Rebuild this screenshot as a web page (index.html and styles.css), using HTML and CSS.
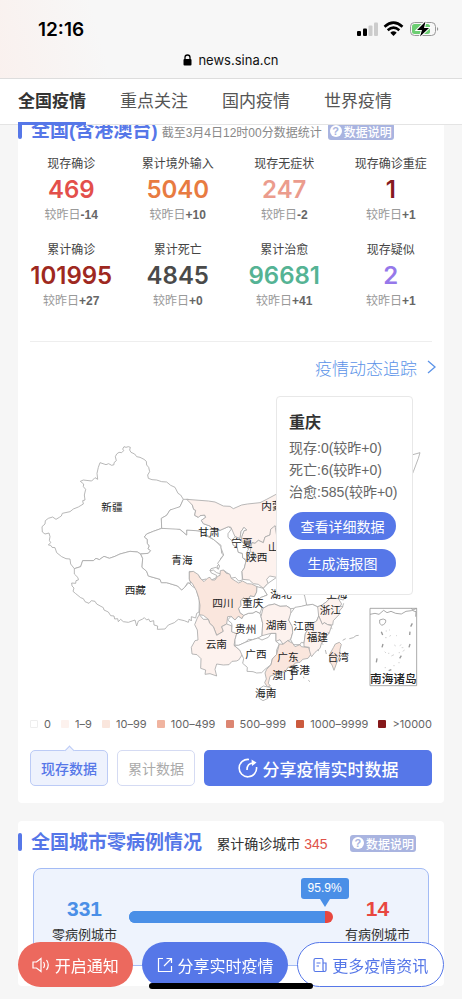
FILE: index.html
```html
<!DOCTYPE html>
<html lang="zh-CN">
<head>
    <meta charset="UTF-8">
    <meta name="viewport" content="width=device-width, initial-scale=1.0">
    <title>全国疫情</title>
    <link rel="stylesheet" href="styles.css">
</head>
<body>
    <header class="header">
        <div class="status-bar">
            <span class="time">12:16</span>
            <svg class="status-icons" width="84" height="18" viewBox="0 0 84 18" aria-hidden="true">
                <rect x="1" y="11" width="4" height="5" rx="1"/>
                <rect x="7" y="8.500" width="4" height="7.500" rx="1"/>
                <rect x="12.500" y="5.500" width="4" height="10.500" rx="1" fill="#ccc"/>
                <rect x="18" y="2.500" width="4" height="13.500" rx="1" fill="#ccc"/>
                <path d="M28.500 6.700Q37.500-1.300 46.500 6.700" fill="none" stroke="#000" stroke-width="2.600"/>
                <path d="M31.700 10.200Q37.500 5 43.300 10.200" fill="none" stroke="#000" stroke-width="2.600"/>
                <path d="M34.300 12.700Q37.500 10 40.700 12.700L37.500 16z"/>
                <rect x="54.500" y="2.500" width="25" height="13" rx="4" fill="none" stroke="#999"/>
                <rect x="56" y="4" width="18" height="10" rx="2.500" fill="#6cce72"/>
                <path d="M81 7v4q2.500-2 0-4z" fill="#999"/>
                <path d="M69.500 1.500L61 10h5l-2 6.500L73 8h-5z" stroke="#fff" stroke-width="2"/>
                <path d="M69.500 1.500L61 10h5l-2 6.500L73 8h-5z"/>
            </svg>
        </div>
        <div class="address">
            <svg width="9" height="12" viewBox="0 0 9 12" aria-hidden="true">
                <path d="M2 6V3.500a2.500 2.500 0 0 1 5 0V6" fill="none" stroke="#000" stroke-width="1.300"/>
                <rect x="0.500" y="5" width="8" height="6.500" rx="1"/>
            </svg>
            <span>news.sina.cn</span>
        </div>
        <nav class="tabs">
            <a href="#china" class="tab active">全国疫情</a>
            <a href="#focus" class="tab">重点关注</a>
            <a href="#domestic" class="tab">国内疫情</a>
            <a href="#world" class="tab">世界疫情</a>
        </nav>
    </header>

    <main class="content">
        <section class="card" id="china">
            <div class="card-head">
                <h2>全国(含港澳台)</h2>
                <span class="head-note">截至3月4日12时00分数据统计</span>
                <button type="button" class="explain"><span class="question">?</span>数据说明</button>
            </div>

            <div class="stats">
                <div class="stat">
                    <span class="stat-label">现存确诊</span>
                    <strong class="stat-value red">469</strong>
                    <span class="stat-diff">较昨日<b>-14</b></span>
                </div>
                <div class="stat">
                    <span class="stat-label">累计境外输入</span>
                    <strong class="stat-value orange">5040</strong>
                    <span class="stat-diff">较昨日<b>+10</b></span>
                </div>
                <div class="stat">
                    <span class="stat-label">现存无症状</span>
                    <strong class="stat-value pink">247</strong>
                    <span class="stat-diff">较昨日<b>-2</b></span>
                </div>
                <div class="stat">
                    <span class="stat-label">现存确诊重症</span>
                    <strong class="stat-value maroon">1</strong>
                    <span class="stat-diff">较昨日<b>+1</b></span>
                </div>
                <div class="stat">
                    <span class="stat-label">累计确诊</span>
                    <strong class="stat-value dark-red">101995</strong>
                    <span class="stat-diff">较昨日<b>+27</b></span>
                </div>
                <div class="stat">
                    <span class="stat-label">累计死亡</span>
                    <strong class="stat-value black">4845</strong>
                    <span class="stat-diff">较昨日<b>+0</b></span>
                </div>
                <div class="stat">
                    <span class="stat-label">累计治愈</span>
                    <strong class="stat-value green">96681</strong>
                    <span class="stat-diff">较昨日<b>+41</b></span>
                </div>
                <div class="stat">
                    <span class="stat-label">现存疑似</span>
                    <strong class="stat-value purple">2</strong>
                    <span class="stat-diff">较昨日<b>+1</b></span>
                </div>
            </div>

            <div class="track">
                <a href="#track" class="track-link">疫情动态追踪
                    <svg width="9" height="14" viewBox="0 0 9 14" aria-hidden="true"><path d="M1 1l7 6-7 6" fill="none" stroke="currentColor" stroke-width="1.300"/></svg>
                </a>
            </div>

            <div class="map-box">
                <svg class="map" viewBox="0 0 1278 924" role="img" aria-label="疫情地图">
                    <!-- 新疆 西藏 青海 -->
                    <g class="province" transform="translate(6 102)">
                        <path d="M490 208L482 195 474 190 465 172 452 166 440 156 425 155 410 150 396 149 385 145 383 135 389 125 386 112 380 105 379 94 372 88 360 82 350 80 344 72 333 67 329 60 331 52 325 50 318 52 312 50 308 57 311 62 305 68 297 67 290 72 286 80 289 92 282 98 282 104 275 106 266 101 258 104 240 98 235 112 231 130 233 148 225 143 215 153 190 150 181 154 191 162 190 170 197 178 193 195 195 210 188 212 190 222 175 231 160 237 150 245 127 250 124 258 118 262 108 268 98 261 85 265 76 272 75 282 66 290 67 306 75 312 87 309 90 320 88 331 92 338 85 345 92 346 96 352 105 353 110 368 125 380 138 386 150 387 152 402 163 416 182 410 188 392 220 392 228 385 238 389 252 379 268 385 285 379 300 372 330 364 352 366 362 372 385 370 392 362 384 356 388 348 382 340 382 328 373 321 380 312 400 304 425 295 424 265 440 256 450 240 465 238 480 230z"/>
                        <path d="M163 416L163 432 174 443 175 450 168 452 167 460 155 459 156 468 162 474 159 484 166 490 182 503 190 506 195 515 207 520 214 512 225 514 230 522 250 533 252 540 265 546 272 557 282 558 284 567 293 566 295 575 302 568 310 575 325 577 345 570 350 588 355 573 368 567 373 563 380 570 386 567 390 575 401 572 402 585 413 588 412 598 435 597 445 585 463 578 475 568 493 572 505 577 508 567 514 573 514 560 527 564 530 550 537 546 538 510 532 490 528 475 518 470 506 458 494 472 485 480 473 468 440 458 424 458 420 448 385 438 380 424 366 412 368 385 362 372 352 366 330 364 300 372 285 379 268 385 252 379 238 389 228 385 220 392 188 392 182 410z"/>
                        <path d="M425 295L450 291 480 298 490 307 500 315 500 300 516 300 540 303 560 318 585 331 603 350 605 370 611 375 602 385 599 402 591 408 595 417 580 416 570 420 574 429 590 436 588 444 578 448 570 458 558 447 545 450 535 436 528 437 523 427 508 424 508 446 512 460 503 458 494 472 485 480 473 468 440 458 424 458 420 448 385 438 380 424 366 412 368 385 362 372 385 370 392 362 384 356 388 348 382 340 382 328 373 321 380 312 400 304z"/>
                    </g>
                    <!-- 中东部 -->
                    <g class="province" transform="translate(426 282)">
                        <path d="M70 28L85 28 97 45 101 58 107 61 104 76 115 82 120 77 134 75 137 82 124 91 130 101 150 108 160 119 180 121 205 110 215 116 204 131 204 142 216 152 220 166 231 171 235 187 247 190 249 204 258 213 253 234 246 244 247 270 236 273 226 262 212 265 208 253 190 240 182 252 170 248 160 240 150 243 153 236 168 232 175 238 179 228 173 220 191 195 183 174 183 166 160 148 138 134 120 123 80 120 80 135 60 118 5 115 4 85 20 76 30 60 60 50z"/>
                        <path class="level1" d="M80 28L145 33 165 36 190 48 210 49 220 56 245 45 262 42 300 38 320 28 350 12 450-20 420-120 520-100 500 50 350 107 332 118 330 135 315 141 310 158 295 151 285 160 276 158 265 178 258 165 245 155 245 140 252 122 260 120 252 112 243 125 240 146 225 140 213 112 205 110 180 121 160 119 150 108 130 101 124 91 137 82 134 75 120 77 115 82 104 76 107 61 101 58 97 45z"/>
                        <path class="level1" d="M332 118L345 107 352 150 350 262 329 258 320 268 324 280 310 295 295 283 280 281 268 270 248 268 246 244 253 234 258 213 282 211 290 201 285 190 270 185 276 158 285 160 295 151 310 158 315 141 330 135z"/>
                        <path d="M243 125L252 112 260 120 252 122 245 140 245 155 258 165 265 178 259 190 262 210 248 204 247 190 235 187 231 171 220 166 216 152 225 140 240 146z"/>
                        <path class="level2" d="M88 246L100 244 115 254 120 264 132 275 143 264 150 262 155 270 165 270 173 259 180 256 181 242 190 240 199 250 209 252 214 265 226 273 236 279 248 273 262 281 275 282 291 290 290 306 283 320 270 318 264 333 251 324 242 332 243 347 236 355 240 368 251 376 246 386 235 379 225 390 213 379 203 380 200 402 185 410 190 424 170 436 160 410 149 400 145 388 130 376 118 374 120 346 116 323 109 302 98 282 88 270z"/>
                        <path class="level1" d="M118 374L130 388 145 388 149 400 160 410 170 436 190 424 185 410 200 402 216 408 215 425 230 431 225 449 222 466 239 480 243 475 249 491 236 510 229 513 216 514 207 524 190 525 170 522 165 538 170 558 150 551 135 553 137 540 122 535 123 506 111 494 96 492 94 472 105 452 114 450 112 420 104 404 112 384z"/>
                        <path d="M216 408L215 400 203 390 213 379 225 390 235 379 246 386 251 376 265 370 279 369 288 364 300 370 303 380 308 400 306 437 294 444 278 449 265 448 258 456 236 466 225 466 225 449 230 431 215 425z"/>
                        <path d="M236 466L258 456 278 449 294 444 306 450 325 442 333 430 348 430 348 454 358 462 350 480 350 493 337 507 333 524 315 538 305 548 290 549 279 545 261 544 262 532 248 520 251 506 239 480 222 466z"/>
                        <path d="M290 306L291 290 310 295 322 315 304 322 292 330 292 340 306 353 300 370 288 364 279 369 265 370 251 376 240 368 236 355 243 347 242 332 251 324 264 333 270 318 283 320z"/>
                        <path d="M310 295L324 280 350 262 440 320 440 345 410 354 392 356 380 348 360 349 344 342 325 346 309 355 292 340 292 330 304 322 322 315z"/>
                        <path class="level1" d="M309 355L325 346 344 342 360 349 380 348 392 356 393 375 386 390 397 410 398 428 392 449 383 452 369 463 360 449 348 454 348 430 333 430 306 437 308 400 303 380z"/>
                        <path d="M392 370L405 352 424 349 440 345 458 343 473 350 480 362 476 378 470 393 450 404 444 418 436 431 432 459 424 457 420 464 400 464 392 449 398 428 397 410 386 390z"/>
                        <path d="M430 300L520 280 560 315 550 330 535 326 510 324 500 335 485 346 473 350 458 343 440 345z"/>
                        <path class="level1" d="M473 350L485 346 500 335 510 324 535 326 545 342 540 348 549 350 538 363 537 374 520 392 518 405 503 404 493 398 487 403 480 387 476 378z"/>
                        <path class="level1" d="M476 378L480 387 487 403 493 398 503 404 515 407 508 428 499 440 492 453 485 458 480 475 465 487 455 500 446 485 448 472 432 470 432 459 436 431 444 418 450 404 470 393z"/>
                        <path class="level2" d="M358 462L369 463 383 452 398 460 405 470 420 464 424 470 446 473 452 494 444 505 428 508 420 517 406 519 397 529 385 531 376 544 347 552 330 559 325 580 331 588 322 591 314 578 319 567 315 549 320 538 333 524 337 507 350 493z"/>
                        <path d="M295 610L300 595 310 588 323 591 335 593 331 607 324 625 309 632 298 625z"/>
                        <path class="level2" d="M520 473L526 462 538 457 544 463 540 478 539 500 530 519 522 541 516 525 508 514 509 493z"/>
                        <path d="M350 100L420 70 500 90 630 60 755-105 780-112 775-95 760-55 690 110 560 200 540 280" fill="none"/>
                        <path d="M496 480l3 12M548 451l9-5M568 446l12-3 8-6 8-1M400 530l8-2M430 560l2 5M445 571l5 4" fill="none"/>
                        <path d="M513 413l4 3M503 427l5 3M486 461l4 2M473 480l4 3M551 340l-3 9" fill="none"/>
                    </g>
                    <!-- 南海诸岛 -->
                    <g class="sea" transform="translate(1056 637)">
                        <path d="M0 0H140V232H0z"/>
                        <path d="M0 18l15-3 12 3 14-12 10 7 12-4 14 6 17 2 14-8 16-2 16-7M29 35q12-6 18 0 2 12-12 16-9-5-6-16M124 0l6 8 8 2-1 15"/>
                        <path d="M127 45l-5 10M34 70l4 10M120 70l-1 10M39 107l-3 10M120 107l-3 10M21 150l-2 12M94 142l-5 8M56 187l8-3" stroke-width="4"/>
                        <path d="M47 68h4M57 65h3M45 88h5M58 84l5-3M78 82h3M89 112l5-3M95 118h5M74 109l2 5M44 130l4 4M54 135h4M64 143l8-4M86 133h4M98 129l6-4M44 178h4M70 172h4M85 163h4" opacity="0.500"/>
                    </g>
                    <g class="map-labels">
                        <text x="282" y="345">新疆</text>
                        <text x="352" y="594">西藏</text>
                        <text x="492" y="505">青海</text>
                        <text x="573" y="420">甘肃</text>
                        <text x="672" y="454">宁夏</text>
                        <text x="716" y="496">陕西</text>
                        <text x="778" y="343">内蒙古</text>
                        <text x="782" y="466">山西</text>
                        <text x="615" y="632">四川</text>
                        <text x="704" y="632">重庆</text>
                        <text x="789" y="607">湖北</text>
                        <text x="957" y="607">上海</text>
                        <text x="937" y="655">浙江</text>
                        <text x="683" y="711">贵州</text>
                        <text x="775" y="700">湖南</text>
                        <text x="858" y="703">江西</text>
                        <text x="898" y="735">福建</text>
                        <text x="595" y="755">云南</text>
                        <text x="714" y="785">广西</text>
                        <text x="810" y="795">广东</text>
                        <text x="961" y="796">台湾</text>
                        <text x="844" y="834">香港</text>
                        <text x="795" y="848">澳门</text>
                        <text x="743" y="904">海南</text>
                        <text class="sea-label" x="1126" y="861">南海诸岛</text>
                    </g>
                </svg>

                <div class="popup">
                    <h3>重庆</h3>
                    <p>现存:0(较昨+0)</p>
                    <p>死亡:6(较昨+0)</p>
                    <p>治愈:585(较昨+0)</p>
                    <button type="button">查看详细数据</button>
                    <button type="button">生成海报图</button>
                </div>
            </div>

            <ul class="legend">
                <li><i class="swatch c0"></i>0</li>
                <li><i class="swatch c1"></i>1–9</li>
                <li><i class="swatch c2"></i>10–99</li>
                <li><i class="swatch c3"></i>100–499</li>
                <li><i class="swatch c4"></i>500–999</li>
                <li><i class="swatch c5"></i>1000–9999</li>
                <li><i class="swatch c6"></i>&gt;10000</li>
            </ul>

            <div class="actions">
                <button type="button" class="toggle active">现存数据</button>
                <button type="button" class="toggle">累计数据</button>
                <button type="button" class="share">
                    <svg width="20" height="20" viewBox="0 0 20 20" fill="none" stroke="currentColor" stroke-width="1.600" aria-hidden="true">
                        <path d="M11 1.500A8.700 8.700 0 1 0 18.500 9"/>
                        <path d="M9 12C9 7.500 11.500 5 15.500 5"/>
                        <path d="M13.500 1.500L18.500 4.500 14 8z" fill="currentColor" stroke="none"/>
                    </svg>
                    分享疫情实时数据
                </button>
            </div>
        </section>

        <section class="card city-card">
            <div class="card-head">
                <h2>全国城市零病例情况</h2>
                <span class="city-total">累计确诊城市 <em>345</em></span>
                <button type="button" class="explain"><span class="question">?</span>数据说明</button>
            </div>
            <div class="city-box">
                <div class="city">
                    <strong class="zero">331</strong>
                    <span>零病例城市</span>
                </div>
                <div class="progress">
                    <div class="progress-fill" style="width: 95.9%"><span class="percent">95.9%</span></div>
                </div>
                <div class="city">
                    <strong class="infected">14</strong>
                    <span>有病例城市</span>
                </div>
            </div>
        </section>
    </main>

    <footer class="bottom-bar">
        <button type="button" class="pill notify">
            <svg width="18" height="16" viewBox="0 0 18 16" fill="none" stroke="currentColor" stroke-width="1.200" aria-hidden="true">
                <path d="M1 5h3.500L9 1.500v13L4.500 11H1zM11.500 5q2 3 0 6M14.500 3q3.500 5 0 10"/>
            </svg>
            开启通知
        </button>
        <button type="button" class="pill share-pill">
            <svg width="16" height="16" viewBox="0 0 16 16" fill="none" stroke="currentColor" stroke-width="1.200" aria-hidden="true">
                <path d="M6 1.500H1.500v13h13V9M9.500 1.500h5V6M14.500 1.500L7 9"/>
            </svg>
            分享实时疫情
        </button>
        <button type="button" class="pill more">
            <svg width="14" height="16" viewBox="0 0 14 16" fill="none" stroke="currentColor" stroke-width="1.200" aria-hidden="true">
                <path d="M10 14.500H2.500Q1 14.500 1 13V3Q1 1.500 2.500 1.500H8.500Q10 1.500 10 3V13Q10 14.500 11.500 14.500T13 13V6H10M3.500 6h4M3.500 9h2.500"/>
            </svg>
            更多疫情资讯
        </button>
    </footer>
    <div class="home-indicator"></div>
</body>
</html>
```
FILE: styles.css
```css
* {
    box-sizing: border-box;
}
body {
    margin: 0;
    background-color: #f6f6f6;
    color: #444;
    font-family: "Liberation Sans", "Noto Sans CJK SC", sans-serif;
    font-size: 14px;
}
h2, h3, p, ul {
    margin: 0;
    padding: 0;
}
button {
    border: none;
    padding: 0;
    font-family: inherit;
    cursor: pointer;
}
a {
    text-decoration: none;
}

/* header */
.header {
    position: fixed;
    top: 0;
    left: 0;
    right: 0;
    z-index: 10;
    background: linear-gradient(75deg, #faf0ed, #f7f7f7 25%);
}
.status-bar {
    display: flex;
    justify-content: space-between;
    align-items: center;
    height: 46px;
    padding: 12px 22px 0 38px;
}
.time {
    font-family: Inter, sans-serif;
    font-size: 19px;
    font-weight: 600;
    color: #000;
}
.address {
    display: flex;
    justify-content: center;
    align-items: center;
    gap: 6px;
    height: 32px;
    padding-bottom: 4px;
    font-family: Inter, sans-serif;
    font-size: 13px;
    color: #111;
}
.tabs {
    display: flex;
    gap: 34px;
    height: 47px;
    padding: 0 18px;
    background-color: #fff;
    border-top: 1px solid #ddd;
    border-bottom: 1px solid #e4e4e4;
}
.tab {
    height: 46px;
    line-height: 46px;
    font-size: 17px;
    color: #555;
}
.tab.active {
    font-weight: bold;
    color: #333;
    border-bottom: 3px solid #5677e8;
}

/* cards */
.content {
    padding: 109px 18px 14px;
}
.card {
    background-color: #fff;
    border-radius: 4px;
}
.card-head {
    display: flex;
    align-items: center;
    height: 44px;
    padding-right: 28px;
}
.card-head h2 {
    font-size: 19px;
    line-height: 28px;
    color: #5677e8;
    white-space: nowrap;
}
.card-head h2::before {
    content: "";
    display: inline-block;
    width: 4px;
    height: 18px;
    margin-right: 9px;
    border-radius: 2px;
    background-color: #5677e8;
    vertical-align: -2px;
}
.head-note {
    margin: 0 6px 0 4px;
    font-size: 12px;
    color: #888;
    white-space: nowrap;
}
.explain {
    display: flex;
    align-items: center;
    gap: 2px;
    height: 17px;
    padding: 0 2px;
    border-radius: 3px;
    background-color: #a9b4e0;
    color: #fff;
    font-size: 12px;
    font-weight: 500;
    white-space: nowrap;
}
.question {
    width: 12px;
    height: 12px;
    border-radius: 50%;
    background-color: #fff;
    color: #a9b4e0;
    font-size: 11px;
    line-height: 12px;
    font-weight: bold;
}

/* numbers */
.stats {
    display: grid;
    grid-template-columns: repeat(4, 1fr);
    row-gap: 16px;
    padding: 2px 0 30px;
}
.stat {
    display: flex;
    flex-direction: column;
    align-items: center;
    height: 70px;
}
.stat-label {
    font-size: 12px;
    line-height: 18px;
}
.stat-value {
    font-family: Inter, sans-serif;
    font-size: 24px;
    font-weight: 600;
    line-height: 34px;
}
.stat-diff {
    font-size: 12px;
    line-height: 16px;
    color: #999;
}
.stat-diff b {
    color: #666;
}
.red { color: #e34f4b; }
.orange { color: #e87b41; }
.pink { color: #eb9c8d; }
.maroon { color: #851a20; }
.dark-red { color: #9e2820; }
.black { color: #4a4a4a; }
.green { color: #55b394; }
.purple { color: #9678ea; }

.track {
    display: flex;
    justify-content: flex-end;
    height: 55px;
    margin: 0 12px;
    border-top: 1px solid #eee;
}
.track-link {
    display: flex;
    align-items: center;
    gap: 10px;
    height: 50px;
    margin-right: -4px;
    color: #5b93e8;
    font-size: 17px;
    font-weight: 300;
}

/* map */
.map-box {
    position: relative;
}
.map {
    display: block;
    width: 100%;
}
.province {
    fill: #fff;
    stroke: #aaa;
    stroke-width: 2.500;
    stroke-linejoin: round;
}
.level1 { fill: #fdf2ee; }
.level2 { fill: #fae6dd; }
.sea {
    fill: none;
    stroke: #999;
    stroke-width: 2.500;
}
.map-labels {
    font-size: 32px;
    fill: #222;
    text-anchor: middle;
}
.sea-label {
    font-size: 35px;
    font-weight: 500;
}
.popup {
    position: absolute;
    top: 0;
    right: 31px;
    width: 137px;
    padding: 15px 12px 17px;
    border: 1px solid #e8e8e8;
    border-radius: 4px;
    background-color: #fff;
    color: #666;
    white-space: nowrap;
}
.popup h3 {
    font-size: 16px;
    line-height: 22px;
    margin-bottom: 3px;
    color: #333;
}
.popup p {
    line-height: 22px;
}
.popup button {
    display: block;
    width: 107px;
    height: 28px;
    margin-top: 9px;
    border-radius: 14px;
    background-color: #5677e8;
    color: #fff;
    font-size: 14px;
}

.legend {
    display: flex;
    justify-content: space-between;
    align-items: center;
    height: 40px;
    padding: 0 12px;
    list-style: none;
    font-family: Inter, sans-serif;
    font-size: 11px;
    color: #666;
    white-space: nowrap;
}
.legend li {
    display: flex;
    align-items: center;
    gap: 6px;
}
.swatch {
    width: 8px;
    height: 8px;
    border-radius: 1px;
}
.c0 { border: 1px solid #eee; }
.c1 { background-color: #fdf2ee; }
.c2 { background-color: #fae6dd; }
.c3 { background-color: #f0b4a0; }
.c4 { background-color: #dc8672; }
.c5 { background-color: #cb5a3e; }
.c6 { background-color: #85181a; }

.actions {
    display: flex;
    gap: 9px;
    padding: 6px 12px 17px;
}
.actions button {
    height: 36px;
    border-radius: 5px;
}
.toggle {
    position: relative;
    width: 78px;
    border: 1px solid #d5dbf3;
    background-color: #fff;
    color: #aaa;
    font-size: 14px;
}
.toggle.active {
    background-color: #eef2fd;
    border-color: #bccbf6;
    color: #5677e8;
    font-weight: 500;
}
.toggle.active::before {
    content: "";
    position: absolute;
    top: -4px;
    left: 35px;
    width: 6px;
    height: 6px;
    border-top: 1px solid #bccbf6;
    border-left: 1px solid #bccbf6;
    background-color: #eef2fd;
    transform: rotate(45deg);
}
.share {
    display: flex;
    flex: 1;
    justify-content: center;
    align-items: center;
    gap: 5px;
    background-color: #5677e8;
    color: #fff;
    font-size: 17px;
    font-weight: 500;
}

/* cities */
.city-card {
    margin-top: 18px;
    padding-bottom: 20px;
}
.city-card .card-head {
    justify-content: space-between;
}
.city-total {
    color: #333;
    white-space: nowrap;
}
.city-total em {
    font-style: normal;
    color: #e0524a;
}
.city-card .explain {
    margin-left: 8px;
}
.city-box {
    display: flex;
    align-items: center;
    gap: 12px;
    height: 98px;
    margin: 3px 15px 0;
    padding: 0 18px;
    border: 1px solid #a3bbf5;
    border-radius: 8px;
    background-color: #eef3fd;
}
.city {
    display: flex;
    flex-direction: column;
    align-items: center;
    padding-top: 8px;
    color: #333;
    font-size: 13px;
    line-height: 24px;
}
.city strong {
    font-size: 21px;
    line-height: 28px;
}
.zero { color: #4a8fe7; }
.infected { color: #e8473f; }
.progress {
    flex: 1;
    height: 12px;
    border-radius: 6px;
    background: linear-gradient(90deg, #4a8fe7 50%, #e8473f 50%);
}
.progress-fill {
    position: relative;
    height: 12px;
    border-radius: 6px 0 0 6px;
    background-color: #4a8fe7;
}
.percent {
    position: absolute;
    right: -24px;
    bottom: 24px;
    width: 48px;
    height: 21px;
    border-radius: 3px;
    background-color: #4a8fe7;
    color: #fff;
    font-size: 12px;
    line-height: 21px;
    text-align: center;
}
.percent::after {
    content: "";
    position: absolute;
    top: 100%;
    left: 19px;
    border: 5px solid transparent;
    border-top: 8px solid #4a8fe7;
    border-bottom: none;
}

/* bottom buttons */
.bottom-bar {
    position: fixed;
    left: 0;
    right: 0;
    bottom: 12px;
    z-index: 10;
    display: flex;
    gap: 9px;
    padding: 0 18px;
}
.pill {
    display: flex;
    justify-content: center;
    align-items: center;
    gap: 5px;
    flex: 1 1 146px;
    height: 45px;
    border-radius: 23px;
    font-size: 16px;
    white-space: nowrap;
}
.notify {
    flex-basis: 114px;
    background-color: #ec695e;
    color: #fff;
}
.share-pill {
    background-color: #5677e8;
    color: #fff;
}
.more {
    border: 1px solid #5677e8;
    background-color: #fff;
    color: #5677e8;
}
.home-indicator {
    position: fixed;
    left: 50%;
    bottom: 10px;
    z-index: 11;
    width: 164px;
    height: 6px;
    border-radius: 3px;
    background-color: #000;
    transform: translateX(-50%);
}
```
